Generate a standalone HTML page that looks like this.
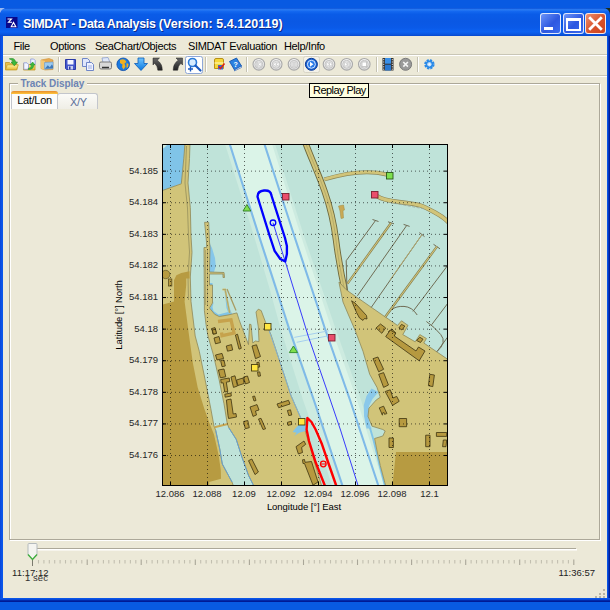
<!DOCTYPE html>
<html><head><meta charset="utf-8">
<style>
html,body{margin:0;padding:0;}
body{width:610px;height:610px;overflow:hidden;background:#085ae2;font-family:"Liberation Sans",sans-serif;position:relative;}
.abs{position:absolute;}
#win{position:absolute;left:0;top:8px;width:610px;height:594px;background:linear-gradient(to right,#0a44d8 0,#0a56ea 2px,#0a56ea 3px,#0a5cf0 606px,#0a5cf0 607px,#0848d8 608px,#0028a8 609px,#00138c 610px);border-radius:7px 7px 0 0;overflow:hidden;}
#title{position:absolute;left:0;top:0;width:610px;height:28px;background:linear-gradient(to bottom,#0a50d6 0%,#2a7cf4 6%,#1468f0 12%,#0a5ce8 22%,#0a58e4 50%,#0a5ae8 70%,#0c62f2 85%,#0a56e0 94%,#0848cc 100%);}
#title .t{position:absolute;left:23px;top:9px;color:#fff;font-weight:bold;font-size:12.5px;letter-spacing:-0.14px;text-shadow:1px 1px 0 #0a2a8a;white-space:nowrap;}
#client{position:absolute;left:3px;top:28px;width:604px;height:562px;background:#ece9d8;}
.menu{position:absolute;top:4px;font-size:11px;letter-spacing:-0.35px;color:#000;white-space:nowrap;}
.cb{position:absolute;top:5px;width:19px;height:19px;border:1px solid rgba(255,255,255,0.85);border-radius:3px;box-sizing:content-box;}
.yl{position:absolute;left:108px;width:50px;text-align:right;font-size:9.5px;letter-spacing:0px;line-height:12px;color:#262626}
.xl{position:absolute;top:487.800px;width:40px;text-align:center;font-size:9.5px;letter-spacing:0px;line-height:12px;color:#262626}
</style></head><body>
<div class="abs" style="left:604px;top:8px;width:6px;height:6px;background:#1c2c1c"></div>
<div class="abs" style="left:0;top:8px;width:5px;height:5px;background:#9ab8f0"></div>
<div id="win">
 <div id="title">
  <svg class="abs" style="left:6px;top:9px" width="12" height="11"><rect width="11.500" height="11" fill="#08088c"/><path d="M1.500 2h4l-3 3.200h3.500M5.200 9.800l2.300-4.300l2.300 4.300z" stroke="#fff" stroke-width="1.100" fill="none"/></svg>
  <div class="t"><span style="letter-spacing:-0.32px">SIMDAT - Data Analysis </span><span style="letter-spacing:0.05px">(Version: 5.4.120119)</span></div>
  <div class="cb" style="left:540px;background:linear-gradient(135deg,#6c94f8,#2e58e0 55%,#3a6cf0)"><div class="abs" style="left:3px;top:13px;width:9px;height:3px;background:#fff"></div></div>
  <div class="cb" style="left:563px;background:linear-gradient(135deg,#6c94f8,#2e58e0 55%,#3a6cf0)"><div class="abs" style="left:2px;top:4px;width:11px;height:8px;border:2px solid #fff;border-top-width:3px"></div></div>
  <div class="cb" style="left:585px;background:linear-gradient(135deg,#ee9070,#d8522a 55%,#cc4420)"><svg class="abs" style="left:0;top:0" width="19" height="19"><path d="M3.200 3.200L15.800 15.800M15.800 3.200L3.200 15.800" stroke="#fff" stroke-width="2.800"/></svg></div>
 </div>
 <div class="abs" style="left:0;top:590px;width:610px;height:4px;background:linear-gradient(to bottom,#0a5cf0 0,#0848d8 1.500px,#0028a8 2.500px,#00138c 4px)"></div>
  <div id="client">
  <div class="menu" style="left:10.500px">File</div>
  <div class="menu" style="left:47px">Options</div>
  <div class="menu" style="left:92px">SeaChart/Objects</div>
  <div class="menu" style="left:185px">SIMDAT Evaluation</div>
  <div class="menu" style="left:281px">Help/Info</div>
  <div class="abs" style="left:0;top:18px;width:604px;height:1px;background:#c9c6b6"></div>
  <div class="abs" style="left:0;top:19px;width:604px;height:1px;background:#fff"></div>
  <div class="abs" style="left:0;top:39px;width:604px;height:1px;background:#c9c6b6"></div>
  <div class="abs" style="left:0;top:40px;width:604px;height:1px;background:#fff"></div>
 </div>
</div>
<div id="p" class="abs" style="left:0;top:0;width:610px;height:610px">

<svg class="abs" style="left:0;top:54px" width="610" height="22" viewBox="0 54 610 22">
 <defs>
  <linearGradient id="gfold" x1="0" y1="0" x2="0" y2="1"><stop offset="0" stop-color="#fff3a0"/><stop offset="1" stop-color="#e8b830"/></linearGradient>
  <linearGradient id="gbtn" x1="0" y1="0" x2="0" y2="1"><stop offset="0" stop-color="#fdfdfd"/><stop offset="1" stop-color="#dcdcdc"/></linearGradient>
  <linearGradient id="gblue" x1="0" y1="0" x2="0" y2="1"><stop offset="0" stop-color="#6fc4ff"/><stop offset="1" stop-color="#0a78e0"/></linearGradient>
  <linearGradient id="gdark" x1="0" y1="0" x2="0" y2="1"><stop offset="0" stop-color="#666"/><stop offset="1" stop-color="#222"/></linearGradient>
 </defs>
 <!-- folder1 -->
 <path d="M5.500 62.500h4l1 1.200h6.500v6h-11.500z" fill="#eec048" stroke="#c09828" stroke-width=".8"/>
 <path d="M5.500 69.800l1.800-5h11l-1.800 5z" fill="url(#gfold)" stroke="#c8a030" stroke-width=".8"/>
 <path d="M9.300 58.800q5.500-1.500 6.300 3.200h1.900l-3.200 3.800l-3.200-3.800h1.900q-.4-2.300-3.700-3.200z" fill="#3cb83c" stroke="#1f8a25" stroke-width=".6"/>
 <!-- folder2 -->
 <path d="M23.500 63.500h3.500l1 1h7v5.500h-11.500z" fill="url(#gfold)" stroke="#c09828" stroke-width=".8"/>
 <path d="M23.800 62.800h3.200l1.500 1.500v5h-4.700z" fill="#f2f5ff" stroke="#8a98d8" stroke-width=".8"/>
 <path d="M30.700 59h3l1.500 1.500v4h-4.500z" fill="#eef2ff" stroke="#8a98d8" stroke-width=".8"/>
 <path d="M28.200 68.500q3.500-.5 3.200-3.500h-1.500l2.800-3l2.300 3h-1.400q.3 4.500-5.400 4.500z" fill="#3cb83c" stroke="#1f8a25" stroke-width=".5"/>
 <!-- folder3 -->
 <path d="M41 60l8-1.500l4 1.500v9.500l-8 .5l-4-1.500z" fill="#e8aa50" stroke="#d09038" stroke-width=".6"/>
 <path d="M41 60l4 1v9l-4-1.500z" fill="#f2c878"/>
 <path d="M44.500 62.500l8.500-.5v6.500l-8.500 .8z" fill="#9ccaf0" stroke="#6a9ad0" stroke-width=".6"/>
 <path d="M44.800 68.800l3-3.500l2 2l2-2.800l1.200 1.500v2.300z" fill="#3f78b8"/>
 <!-- sep -->
 <path d="M58.500 57v15" stroke="#c5c2b2"/><path d="M59.500 57v15" stroke="#fff"/>
 <!-- save -->
 <path d="M65.500 59.500h10v10h-9l-1-1z" fill="#4558cc" stroke="#2a3aa8" stroke-width="1"/>
 <rect x="67.500" y="60" width="6" height="4.500" fill="#f4f6ff"/>
 <rect x="68" y="66" width="5" height="3.500" fill="#c8d0f0"/><rect x="69" y="66.500" width="1.500" height="3" fill="#2a3aa0"/>
 <!-- copy -->
 <path d="M82.500 58.500h5l2 2v6h-7z" fill="#dfe6fb" stroke="#6f86c8" stroke-width="1"/>
 <path d="M86.500 62.500h5l2 2v6h-7z" fill="#eef2ff" stroke="#6f86c8" stroke-width="1"/>
 <path d="M88 66h4M88 68h4" stroke="#8ea0d8" stroke-width=".8"/>
 <!-- printer -->
 <path d="M102 58l6-.5l2 5h-7z" fill="#dfe8fa" stroke="#8a9ccc" stroke-width=".8"/>
 <path d="M99.500 63.500q0-1.500 1.500-1.500h9q1.500 0 1.500 1.500v4q0 1.500-1.500 1.500h-9q-1.500 0-1.500-1.500z" fill="#d8d8d8" stroke="#7a7a7a" stroke-width="1"/>
 <path d="M102 67.500h7" stroke="#333" stroke-width="1.500"/>
 <!-- globe -->
 <circle cx="123.200" cy="64.300" r="6.300" fill="#1a7ae0" stroke="#0a4aa8" stroke-width=".8"/>
 <path d="M120 60q3-1.500 5 0l1.500 2l-2 1.500l1 3l-2 3l-1.500-2.500l.5-2.500l-2.500-1.500z" fill="#f0b020"/>
 <path d="M126.500 63l2 1l-.5 3l-1.500 1z" fill="#f0b020"/>
 <!-- down arrow -->
 <path d="M138 58h6v5.500h3.500l-6.500 7l-6.500-7h3.500z" fill="url(#gblue)" stroke="#0a5ab8" stroke-width=".8"/>
 <!-- arrow UL -->
 <path d="M153 58h6.500l-2.200 2.200q5 3.500 5 10h-4.500q-.2-4.500-3.300-7l-1.500 1.800z" fill="url(#gdark)" stroke="#222" stroke-width=".5"/>
 <!-- arrow UR -->
 <path d="M182.500 58h-6.500l2.200 2.200q-5 3.500-5 10h4.500q.2-4.500 3.300-7l1.500 1.800z" fill="url(#gdark)" stroke="#222" stroke-width=".5"/>
 <!-- zoom button -->
 <rect x="185.500" y="56.500" width="17" height="17" rx="2" fill="#fff" stroke="#8fa8d8" stroke-width="1"/>
 <circle cx="192.500" cy="62.500" r="4" fill="#d6ecff" stroke="#2a7ad8" stroke-width="1.600"/>
 <path d="M195.500 65.500l5 5" stroke="#1a5ac0" stroke-width="2.200" stroke-linecap="round"/>
 <path d="M188 69h5M190.500 66.500v5" stroke="#1a5ac0" stroke-width="1.400"/>
 <!-- sep -->
 <path d="M205.500 57v15" stroke="#c5c2b2"/><path d="M206.500 57v15" stroke="#fff"/>
 <!-- notes -->
 <path d="M214.500 60q0-1.500 1.500-1.500h6q1.500 0 1.500 1.500v8.500h-9z" fill="#f6d83a" stroke="#b89018" stroke-width="1"/>
 <path d="M214.500 63h9" stroke="#fff6b0" stroke-width="1.200"/>
 <rect x="218" y="65" width="5" height="4.500" fill="#3a6ad0"/>
 <path d="M218.500 66.500l2 2l4-5" stroke="#e02010" stroke-width="1.500" fill="none"/>
 <!-- book -->
 <path d="M229.500 61.500l7-3.500l5 8l-7 4z" fill="#2a80e0" stroke="#0a4aa8" stroke-width=".8"/>
 <path d="M234.500 70l7-4v1.500l-7 3.500z" fill="#e8f0ff" stroke="#0a4aa8" stroke-width=".5"/>
 <text x="233.500" y="67" font-size="7" font-weight="bold" fill="#fff" font-family="Liberation Sans">?</text>
 <!-- sep -->
 <path d="M246.500 57v15" stroke="#c5c2b2"/><path d="M247.500 57v15" stroke="#fff"/>
 <!-- selected play bg -->
 <rect x="303.500" y="56.500" width="16" height="16" rx="2" fill="#f3f1e8" stroke="#d8d5c6" stroke-width="1"/>
 <!-- media buttons -->
 <g fill="url(#gbtn)" stroke="#a9a9a9" stroke-width="1.100">
  <circle cx="258.800" cy="64.300" r="5.800"/><circle cx="276.200" cy="64.300" r="5.800"/><circle cx="294" cy="64.300" r="5.800"/>
  <circle cx="329" cy="64.300" r="5.800"/><circle cx="346.700" cy="64.300" r="5.800"/><circle cx="364.300" cy="64.300" r="5.800"/>
 </g>
 <g fill="#e2e2e2" stroke="#c6c6c6" stroke-width="1">
  <circle cx="258.800" cy="64.300" r="4"/><circle cx="276.200" cy="64.300" r="4"/><circle cx="294" cy="64.300" r="4"/>
  <circle cx="329" cy="64.300" r="4"/><circle cx="346.700" cy="64.300" r="4"/><circle cx="364.300" cy="64.300" r="4"/>
 </g>
 <g fill="#fff" stroke="#bdbdbd" stroke-width="0.500">
  <path d="M256.500 62h1v4.600h-1zM261 62v4.600l-3-2.300z"/>
  <path d="M276 62v4.600l-2.800-2.300zM279 62v4.600l-2.800-2.300z"/>
  <path d="M292.300 62h1.100v4.600h-1.100zM294.600 62h1.100v4.600h-1.100z"/>
  <path d="M326.700 62v4.600l2.800-2.300zM329.500 62v4.600l2.800-2.300z"/>
  <path d="M344.500 62v4.600l3-2.300zM348 62h1v4.600h-1z"/>
 </g>
 <rect x="362" y="62" width="4.600" height="4.600" fill="#fff" stroke="#c0c0c0" stroke-width=".8"/>
 <circle cx="311.400" cy="64.300" r="6" fill="#1a62d0" stroke="#0a3a98" stroke-width="1"/>
 <circle cx="311.400" cy="64.300" r="4" fill="#2a7ae8" stroke="#d8e8ff" stroke-width="1"/>
 <path d="M310 61.800v5l3.400-2.500z" fill="#fff"/>
 <!-- sep -->
 <path d="M376.500 57v15" stroke="#c5c2b2"/><path d="M377.500 57v15" stroke="#fff"/>
 <!-- film -->
 <rect x="382.500" y="58" width="11" height="12.500" fill="#333"/>
 <rect x="385" y="58" width="6" height="5.700" fill="#3a90e8"/><rect x="385" y="64.700" width="6" height="5.800" fill="#2a78d0"/>
 <path d="M383.700 59v11M392.300 59v11" stroke="#ddd" stroke-width="1" stroke-dasharray="1.200 1.200"/>
 <!-- x circle -->
 <circle cx="405.600" cy="64.300" r="6" fill="#9a9a9a" stroke="#7a7a7a" stroke-width="1"/>
 <path d="M403.300 62l4.600 4.600M407.900 62l-4.600 4.600" stroke="#f4f4f4" stroke-width="1.600"/>
 <!-- sep -->
 <path d="M417.500 57v15" stroke="#c5c2b2"/><path d="M418.500 57v15" stroke="#fff"/>
 <!-- gear -->
 <circle cx="429.400" cy="64.300" r="4.200" fill="none" stroke="#2a8ae8" stroke-width="2" stroke-dasharray="2.200 1.100"/>
 <circle cx="429.400" cy="64.300" r="3" fill="#eaf4ff" stroke="#2a8ae8" stroke-width="1.700"/>
 <circle cx="429.400" cy="64.300" r="1.500" fill="#f4f9ff" stroke="#8ac0f4" stroke-width=".5"/>
</svg>
<div class="abs" style="left:309px;top:83px;width:55px;height:13px;border:1px solid #000;background:#ffffe1;font-size:11px;line-height:13px;letter-spacing:-0.55px;padding-left:3px;box-sizing:content-box;white-space:nowrap;z-index:5">Replay Play</div>


<div class="abs" style="left:10px;top:84px;width:591px;height:457px;border:1px solid #fff;box-sizing:border-box"></div>
<div class="abs" style="left:9px;top:83px;width:591px;height:457px;border:1px solid #aca899;box-sizing:border-box"></div>
<div class="abs" style="left:18px;top:78px;width:69px;height:12px;background:#ece9d8"></div>
<div class="abs" style="left:20.500px;top:77.500px;font-size:10px;font-weight:bold;color:#6c84b4;letter-spacing:-0.05px;line-height:12px;white-space:nowrap">Track Display</div>
<!-- tabs -->
<div class="abs" style="left:57px;top:93px;width:41px;height:16px;border:1px solid #c3c6cc;border-bottom:none;border-radius:3px 3px 0 0;box-sizing:border-box;background:linear-gradient(#fbfbf8,#efeee6)"></div>
<div class="abs" style="left:58px;top:96px;width:41px;font-size:11px;letter-spacing:-0.3px;text-align:center;color:#5b6f9a;line-height:13px">X/Y</div>
<div class="abs" style="left:11px;top:91px;width:47px;height:18px;border:1px solid #c3c6cc;border-bottom:none;border-radius:3px 3px 0 0;box-sizing:border-box;background:#fcfcfa"></div>
<div class="abs" style="left:11px;top:91px;width:47px;height:3px;border-radius:3px 3px 0 0;background:linear-gradient(#e68b2c,#ffc73c)"></div>
<div class="abs" style="left:11px;top:94px;width:47px;font-size:11px;letter-spacing:-0.3px;text-align:center;color:#000;line-height:13px">Lat/Lon</div>

<svg class="abs" style="left:162px;top:144px" width="286" height="342" viewBox="162 144 286 342" shape-rendering="auto">
 <defs><clipPath id="cp"><rect x="162.5" y="144.500" width="285" height="341"/></clipPath></defs>
 <g clip-path="url(#cp)">
 <!-- water base -->
 <rect x="162" y="144" width="286" height="342" fill="#bfe3d9"/>
 <!-- mid-light band -->
 <polygon points="225,144 275,144 304,236 336,330 361,400 388,486 332,486 318,442 303,400 281,330 270,290 254,236" fill="#cdebe0"/>
 <!-- light channel -->
 <polygon points="230,144 272,144 301,236 332,330 357,400 384,486 343,486 329,442 315,400 291,330 278,290 260,236" fill="#dbf4e8"/>
 <!-- blue top-left -->
 <polygon points="162,144 186,144 184,160 182,183 163,191 162,191" fill="#80c4e8"/>
 <polygon points="162,144 168,144 164,148 162,149" fill="#cdebe0"/>

 <g id="land">
 <!-- west land -->
 <polygon fill="#d1c479" stroke="#8e8858" stroke-width="0.8" points="161,191 181.3,183.8 183.8,158.4 185,143 190,143 189.500,158.4 188,183 190.300,207.600 191,236 192,252.400 190.300,277 191,301.600 195.200,336 199.300,351.300 205,379.200 210.800,408.700 214,426.200 215.700,430.300 219.800,449.200 222.300,464 232,482 233.800,487 161,487"/>
 <path d="M186.500 146L185 183L187.500 208L188.500 236L189.500 252L188 277L188.500 300" stroke="#8e8858" stroke-width="0.700" fill="none"/>
 <polygon fill="#b79b41" points="161,305 174,301.600 174,280.300 176.400,275.300 181.300,272.900 189.500,271.200 189.500,278.600 186.200,278.600 186.200,285 184.600,301.600 188.700,333 192.800,362.800 197.700,387.400 204.300,408.700 209.400,423 214,434.400 218.600,455 220.800,470 221,478.700 209.200,482 209.200,487 161,487"/>
 <circle cx="165.700" cy="274.500" r="4.200" fill="#b79b41" stroke="#6e6330" stroke-width="0.8"/>
 <rect x="168.500" y="279" width="3.300" height="7" fill="#b79b41" stroke="#5a4e20" stroke-width="0.8"/>
 <!-- basin blue -->
 <polygon fill="#86c6ea" points="209,242 212,248 215,258 215.800,266 214,272 209,272"/>
 <polygon fill="#80c4e8" points="208.500,283 212.500,283 213,303 210,308 214,315.500 219,318 232.500,315 229.500,308 226,290 224.500,290 226.500,308 228,312 218.500,314.500 213.500,311 212.500,307 213.500,303"/>
 <!-- central land -->
 <polygon fill="#d1c479" stroke="#8e8858" stroke-width="0.8" points="204.600,222.300 208.700,222.300 209.500,242 210,247.500 209.500,272 224,272.500 224.500,277.500 223,277.500 223,274 209.500,274 209.500,285 212.500,285 212.500,303 209.500,308 214.700,314.300 219.200,316.500 228,315 236.900,312.900 239,319.500 242.800,329.800 248.500,344.600 249.500,324.200 251,324.500 252.800,343 255.300,341 259,341.600 258.300,326.900 256,312 258.300,309.200 261.200,310.600 265.600,322.400 270.800,334.200 279.600,360.800 291,395.600 300.800,418 304,426 305.700,432.800 310.700,449.200 315.600,465.600 322,487 254.300,487 248.500,475.400 242,457.400 236.200,439.300 228.900,427.900 227.200,423.400 224,403.800 219,379.200 213.300,354.600 208,336 206,324.500 204.400,310.600 204,247.500 206.700,247.500 206.500,242"/>
 <path d="M205.500 250v55M207.500 250v55" stroke="#9a9260" stroke-width="0.600" fill="none"/>
 <!-- canal bridge -->
 <path d="M214.500 427.200L227.800 424" stroke="#c9a955" stroke-width="2.200"/>
 <!-- jetties near basin -->
 <path d="M222.500 289.500h3.500M225.200 290L229.700 313" stroke="#d1c479" stroke-width="1.800" fill="none"/>
 <path d="M222.500 289.500h3.500M225.200 290L229.700 313" stroke="#8e8858" stroke-width="0.500" fill="none"/>
 <path d="M227 289L236 310.500" stroke="#a89c62" stroke-width="1.300" fill="none"/>
 <!-- inlet blue near yellow square -->
 <polygon fill="#80c4e8" points="299.200,424.600 305.700,424.600 305.700,431 299.200,432.800 294.300,436 296.700,432.800 292.600,432 295,428.700"/>
 <!-- east blue -->
 <polygon fill="#8ac8ea" points="371.500,388.500 378.500,392 372.500,399 369,406 368,416 370,425 371.500,428.400 366.500,428.400 364,416 363.800,405 366.500,396"/>
 <polygon fill="#80c4e8" points="371,428 374,438.500 377,450.800 380.300,465.600 386,487 384.300,487 378.500,465 375,450 372.500,440 369,428"/>
 <!-- breakwater -->
 <path d="M305.500 143C312 160 318.500 174 324.500 191S333.500 220 336 240S340.500 272 346 296" stroke="#6f6a3e" stroke-width="6.400" fill="none"/>
 <path d="M305.500 143C312 160 318.500 174 324.500 191S333.500 220 336 240S340.500 272 346 296" stroke="#d1c479" stroke-width="4.600" fill="none"/>
 <path d="M305.500 143C312 160 318.500 174 324.500 191S333.500 220 336 240S340.500 272 346 296" stroke="#a59c62" stroke-width="0.600" fill="none"/>
 <path d="M324.300 179.400Q362 168 386.500 174.500" stroke="#8e8858" stroke-width="4" fill="none"/>
 <path d="M324.300 179.400Q362 168 386.500 174.500" stroke="#d1c479" stroke-width="2.800" fill="none"/>
 <path d="M377 196Q382 200 399 202T420.500 205.500T435 212.500T449 223" stroke="#8e8858" stroke-width="4.400" fill="none"/>
 <path d="M377 196Q382 200 399 202T420.500 205.500T435 212.500T449 223" stroke="#d1c479" stroke-width="3.200" fill="none"/>
 <path d="M390 202.500l35 6.500" stroke="#9aa89a" stroke-width="0.800" stroke-dasharray="3 1.500"/>
 <polygon points="338.500,206 343.500,205 344.500,210 343,210.500 343.500,218 341,218.500 340,211" fill="#c9a955" stroke="#a08a40" stroke-width="0.500"/>
 <!-- east land -->
 <polygon fill="#d1c479" stroke="#8e8858" stroke-width="0.8" points="339,282 346,289.500 350,292.500 370,306.400 397.500,325.400 401.500,320.800 408,325.400 402.800,334.600 415.200,341.800 419.800,334.600 426.400,338.500 423.800,343 448,359.500 448,487 386,487 380.300,465.600 377,450.800 374.600,438.500 382.800,436 385.200,431 382.800,429.500 372,426.200 368,416.400 368.900,408.200 376.200,400 380.300,397.200 377,387.400 369.700,374.300 363,351.300 355,330 348.500,315 343,302 339.500,285"/>
 <polygon fill="#b79b41" points="396,452 448,452 448,487 392.300,487"/>
 <!-- jetties -->
 <g stroke="#6f6c54" stroke-width="1" fill="none">
  <path d="M375.400 220.700L346.200 260.700"/>
  <path d="M391 223L347.500 283.600"/>
  <path d="M406.600 225.600L357.400 295.800"/>
  <path d="M422 234.600L371.300 307.300"/>
  <path d="M436.900 246.700L385.200 317"/>
  <path d="M448 265L413 311.400"/>
  <path d="M448 303L431.600 324.800"/>
  <path d="M448 336.600L437 351.600"/>
  <path d="M391.600 309.700Q396 306 404 306.400T417.200 315"/>
  <path d="M426.400 321.500Q434.300 326.700 440.800 334.600T436.900 351.600"/>
  <path d="M372.500 219.500l6 2M388 221.800l6 2M403.600 224.400l6 2M419.500 232.600l5 4M433.500 244.300l6.500 4.500"/>
  <path d="M346.200 260.700L347 290"/>
 </g>
 <g stroke="#7d7649" stroke-width="2.200" fill="none">
  <path d="M391 223L347.500 283.600"/><path d="M436.900 246.700L385.200 317"/>
 </g>
 <g stroke="#d1c479" stroke-width="1.100" fill="none">
  <path d="M391 223L347.500 283.600"/><path d="M436.900 246.700L385.200 317"/>
 </g>
 <g stroke="#b9ae72" stroke-width="0.900" fill="none">
  <path d="M422 234.600L390 280"/>
 </g>
 </g>

<g fill="#b6993f" stroke="#3e3410" stroke-width="0.800" stroke-linejoin="miter">
<polygon points="211.8,328.5 215.0,327.6 216.2,333.5 213.0,334.2"/>
<polygon points="214.0,338.0 219.0,336.5 220.5,342.5 215.5,343.8"/>
<polygon points="235.4,335.0 237.5,334.2 241.3,348.3 239.0,349.2"/>
<polygon points="226.3,346.0 231.5,344.6 232.7,350.0 227.5,351.2"/>
<polygon points="215.5,355.0 222.0,353.4 223.6,358.5 217.0,360.0"/>
<polygon points="220.6,360.5 224.0,360.0 225.3,366.0 222.0,366.7"/>
<polygon points="218.4,370.0 224.0,369.0 225.8,376.8 220.3,377.8"/>
<polygon points="220.7,379.5 229.2,378.0 229.7,381.5 226.3,382.2 227.8,391.5 224.7,392.0 223.2,382.8 221.2,383.0"/>
<polygon points="224.8,394.2 231.0,393.0 231.3,396.0 225.2,397.2"/>
<polygon points="226.4,400.0 231.0,399.0 233.2,414.0 236.0,413.5 236.5,417.0 228.6,418.5 228.0,415.5"/>
<polygon points="231.0,377.0 235.0,375.8 237.5,386.0 233.5,387.4"/>
<polygon points="236.5,380.0 243.0,378.0 244.2,383.5 238.0,385.5"/>
<polygon points="243.5,377.0 247.5,376.0 249.5,382.5 245.5,384.0"/>
<polygon points="252.0,346.0 256.5,344.8 260.5,356.5 255.5,358.7"/>
<polygon points="256.8,362.5 259.0,362.3 259.7,367.0 257.5,367.4"/>
<polygon points="257.5,372.2 259.8,371.9 260.5,376.0 258.2,376.3"/>
<polygon points="250.0,407.0 257.0,404.6 259.0,410.0 255.5,411.0 256.5,415.0 253.0,416.4"/>
<polygon points="252.6,396.5 254.6,396.0 256.0,400.5 254.0,401.0"/>
<polygon points="243.6,421.5 247.8,420.5 249.3,427.7 245.3,428.7"/>
<polygon points="258.5,419.0 261.0,418.3 265.6,428.8 263.0,429.5"/>
<polygon points="248.5,460.7 251.8,459.0 258.4,472.0 255.0,474.6"/>
<polygon points="277.0,404.0 288.5,400.3 290.0,404.0 278.7,407.7"/>
<polygon points="287.4,410.5 290.5,409.8 291.8,415.0 288.8,415.6"/>
<polygon points="287.4,422.3 291.3,421.3 291.8,424.5 288.0,425.4"/>
<polygon points="296.0,446.7 304.0,441.0 305.7,444.3 301.6,447.5 302.5,452.5 298.4,454.0"/>
<polygon points="302.5,459.8 304.5,459.5 305.0,462.3 311.5,461.5 318.0,482.0 313.0,485.2 304.5,463.5 303.0,463.5"/>
<polygon points="212.3,330.0 215.5,329.3 216.5,333.5 213.3,334.0"/>
<polygon points="351.6,300.8 355.0,303.0 360.5,309.0 366.5,315.5 367.0,319.0 364.5,318.5 363.0,320.4 359.5,318.0 356.5,312.5"/>
<polygon points="376.0,328.0 380.5,324.0 385.7,328.0 381.8,333.3"/>
<polygon points="388.5,331.5 392.0,329.4 396.0,333.0 393.0,336.2"/>
<polygon points="398.9,328.0 401.5,324.4 404.8,326.0 402.0,330.0"/>
<polygon points="416.6,340.5 419.8,337.2 423.0,339.2 420.5,342.5"/>
<polygon points="385.7,336.6 390.3,330.0 395.6,333.3 394.3,336.0 416.0,351.0 418.5,347.0 425.0,351.0 419.2,360.8"/>
<polygon points="373.0,358.7 377.9,357.0 383.6,369.3 378.7,371.8"/>
<polygon points="378.7,374.3 383.6,372.6 388.5,385.0 383.6,387.4"/>
<polygon points="385.2,391.5 390.2,389.8 393.0,398.0 396.7,396.4 399.2,401.3 392.6,405.4"/>
<polygon points="379.2,407.9 383.6,406.2 386.9,413.6 384.5,414.3 384.0,412.5 382.0,413.5 382.5,415.2"/>
<polygon points="399.2,418.5 406.6,418.5 406.6,426.7 399.2,426.7"/>
<polygon points="429.8,374.3 434.4,375.0 432.8,386.6 428.4,385.7"/>
<polygon points="389.0,438.0 393.4,438.0 393.4,447.5 389.0,447.5"/>
<polygon points="425.7,435.2 430.0,435.2 430.0,446.7 425.7,446.7"/>
<polygon points="436.4,432.5 446.7,432.5 446.7,436.4 436.4,436.4"/>
<polygon points="443.3,440.0 446.7,440.0 446.0,446.7 442.6,446.7"/>
</g>
<path d="M218 321.500L231 319.800L234 333L222 335.700L221.500 332.500" stroke="#c6a24c" stroke-width="3.300" fill="none"/>
<path d="M269.300 331.300L279.600 360.800L291 395.600L300.800 418" stroke="#7fb4e0" stroke-width="0.900" fill="none"/>
<path d="M215.700 430.300L219.800 449.200L222.300 464L232 482M228.900 427.900L236.200 439.300L242 457.400L248.500 475.400L254.300 487" stroke="#5fa0dc" stroke-width="0.900" fill="none"/>
<g stroke="#7fbae8" stroke-width="2.100" fill="none">
<path d="M229.700 144L259 236L276.500 290L289.500 330L313.800 400L328 442.600L342.600 486"/>
<path d="M264.400 144L294.300 236L325.400 330L350 400L378.500 486"/>
</g>
<path d="M294.300 337.400L328.700 330.800M296.700 342.300L328.700 335.700" stroke="#9fcbee" stroke-width="0.900" fill="none"/>

 </g>
 <!-- grid -->
 <g stroke="#000" stroke-opacity="0.6" stroke-width="1" stroke-dasharray="1 3" fill="none">
  <path d="M170.500 145v340M207.500 145v340M244.500 145v340M281.500 145v340M318.500 145v340M355.500 145v340M392.500 145v340M429.500 145v340"/>
  <path d="M163 171.13h284M163 202.73h284M163 234.33h284M163 265.93h284M163 297.53h284M163 329.13h284M163 360.73h284M163 392.33h284M163 423.93h284M163 455.53h284"/>
 </g>
 <g stroke="#000" stroke-width="1" fill="none">
  <path d="M170.500 145v3M207.500 145v3M244.500 145v3M281.500 145v3M318.500 145v3M355.500 145v3M392.500 145v3M429.500 145v3"/>
  <path d="M170.500 485v-3M207.500 485v-3M244.500 485v-3M281.500 485v-3M318.500 485v-3M355.500 485v-3M392.500 485v-3M429.500 485v-3"/>
  <path d="M163 171.13h3M163 202.73h3M163 234.33h3M163 265.93h3M163 297.53h3M163 329.13h3M163 360.73h3M163 392.33h3M163 423.93h3M163 455.53h3"/>
  <path d="M447 171.13h-3M447 202.73h-3M447 234.33h-3M447 265.93h-3M447 297.53h-3M447 329.13h-3M447 360.73h-3M447 392.33h-3M447 423.93h-3M447 455.53h-3"/>
 </g>

 <g clip-path="url(#cp)">
 <!-- thin blue track -->
 <path d="M273 222.800L285.200 261.400L308.200 336L330.300 400L340.500 430L358.200 486" stroke="#1a1aff" stroke-width="0.850" fill="none"/>
 <!-- blue ship -->
 <path d="M257.600 197Q257.200 191 264 190.500T271.300 195L285 238L286.900 246L286.900 254L285.200 261.400L280.300 259L274.600 250.800L269.700 236Z" stroke="#0000ff" stroke-width="2.350" fill="none" stroke-linejoin="round"/>
 <circle cx="273" cy="222.800" r="2.800" stroke="#0000ff" stroke-width="1.300" fill="none"/>
 <!-- red ship -->
 <path d="M330 500L324.600 485L315.600 462.300L309 441L306.600 429.500L307.400 418L311.500 422L315.600 429.500L322 444.300L328.700 464L336 485L341 500" stroke="#ff0000" stroke-width="2.400" fill="none" stroke-linejoin="round"/>
 <circle cx="323.300" cy="464" r="2.800" stroke="#ff0000" stroke-width="1.300" fill="none"/>
 <path d="M320.500 464h5.600" stroke="#ff0000" stroke-width="1.200"/>
 <!-- markers -->
 <g stroke-width="0.900">
 <rect x="282.500" y="193.500" width="6.500" height="6.500" fill="#ea4e6c" stroke="#7a2030"/>
 <rect x="371.500" y="191.500" width="6.500" height="6.500" fill="#ea4e6c" stroke="#7a2030"/>
 <rect x="328.500" y="334.500" width="6.500" height="6.500" fill="#ea4e6c" stroke="#7a2030"/>
 <rect x="386.500" y="172.500" width="6.500" height="6.500" fill="#7fe04f" stroke="#2a5a18"/>
 <rect x="264.500" y="323.500" width="6.500" height="6.500" fill="#ffe640" stroke="#4a4010"/>
 <rect x="251.500" y="364.500" width="6.500" height="6.500" fill="#ffe640" stroke="#4a4010"/>
 <rect x="298.500" y="418.500" width="6.500" height="6.500" fill="#ffe640" stroke="#4a4010"/>
 <polygon points="246.900,204.500 250.800,211 243,211" fill="#7fe04f" stroke="#2f7a24"/>
 <polygon points="293.400,346 297.500,352.600 289.300,352.600" fill="#7fe04f" stroke="#2a8a28"/>
 </g>
 </g>

 <rect x="162.500" y="144.500" width="285" height="341" fill="none" stroke="#000" stroke-width="1"/>
</svg>
<div class="yl" style="top:164.5px">54.185</div>
<div class="yl" style="top:196.1px">54.184</div>
<div class="yl" style="top:227.7px">54.183</div>
<div class="yl" style="top:259.3px">54.182</div>
<div class="yl" style="top:290.9px">54.181</div>
<div class="yl" style="top:322.5px">54.18</div>
<div class="yl" style="top:354.1px">54.179</div>
<div class="yl" style="top:385.7px">54.178</div>
<div class="yl" style="top:417.3px">54.177</div>
<div class="yl" style="top:448.9px">54.176</div>
<div class="xl" style="left:150.0px">12.086</div>
<div class="xl" style="left:187.0px">12.088</div>
<div class="xl" style="left:224.0px">12.09</div>
<div class="xl" style="left:261.0px">12.092</div>
<div class="xl" style="left:298.0px">12.094</div>
<div class="xl" style="left:335.0px">12.096</div>
<div class="xl" style="left:372.0px">12.098</div>
<div class="xl" style="left:409.5px">12.1</div>
<div class="abs" style="left:204px;top:501px;width:200px;text-align:center;font-size:9.5px;letter-spacing:-0.05px;line-height:12px">Longitude [°] East</div>
<div class="abs" style="left:19px;top:309px;width:200px;text-align:center;font-size:9.5px;letter-spacing:-0.12px;line-height:12px;transform:rotate(-90deg)">Latitude [°] North</div>


<svg class="abs" style="left:0;top:540px" width="610" height="60" viewBox="0 540 610 60">
 <path d="M36 548.500h540" stroke="#aca899" stroke-width="1"/>
 <path d="M36 549h541v1.500h-541z" fill="#fff" stroke="none"/>
 <path d="M38.5 560v3.500M43.9 560v3.500M49.3 560v3.500M54.7 560v3.500M60.1 560v3.500M65.5 560v3.500M70.9 560v3.500M76.4 560v3.500M81.8 560v3.500M92.6 560v3.500M98.0 560v3.500M103.4 560v3.500M108.8 560v3.500M114.2 560v3.500M119.6 560v3.500M125.0 560v3.500M130.4 560v3.500M135.8 560v3.500M146.6 560v3.500M152.1 560v3.500M157.5 560v3.500M162.9 560v3.500M168.3 560v3.500M173.7 560v3.500M179.1 560v3.500M184.5 560v3.500M189.9 560v3.500M200.7 560v3.500M206.1 560v3.500M211.5 560v3.500M216.9 560v3.500M222.3 560v3.500M227.8 560v3.500M233.2 560v3.500M238.6 560v3.500M244.0 560v3.500M254.8 560v3.500M260.2 560v3.500M265.6 560v3.500M271.0 560v3.500M276.4 560v3.500M281.8 560v3.500M287.2 560v3.500M292.6 560v3.500M298.0 560v3.500M308.9 560v3.500M314.3 560v3.500M319.7 560v3.500M325.1 560v3.500M330.5 560v3.500M335.9 560v3.500M341.3 560v3.500M346.7 560v3.500M352.1 560v3.500M362.9 560v3.500M368.3 560v3.500M373.7 560v3.500M379.1 560v3.500M384.6 560v3.500M390.0 560v3.500M395.4 560v3.500M400.8 560v3.500M406.2 560v3.500M417.0 560v3.500M422.4 560v3.500M427.8 560v3.500M433.2 560v3.500M438.6 560v3.500M444.0 560v3.500M449.4 560v3.500M454.8 560v3.500M460.3 560v3.500M471.1 560v3.500M476.5 560v3.500M481.9 560v3.500M487.3 560v3.500M492.7 560v3.500M498.1 560v3.500M503.5 560v3.500M508.9 560v3.500M514.3 560v3.500M525.1 560v3.500M530.5 560v3.500M536.0 560v3.500M541.4 560v3.500M546.8 560v3.500M552.2 560v3.500M557.6 560v3.500M563.0 560v3.500M568.4 560v3.500" stroke="#c2bfb0" stroke-width="1.100"/>
 <path d="M87.2 559.500v5.500M141.2 559.500v5.500M195.3 559.500v5.500M249.4 559.500v5.500M303.5 559.500v5.500M357.5 559.500v5.500M411.6 559.500v5.500M465.7 559.500v5.500M519.7 559.500v5.500M573.8 559.500v5.500" stroke="#a9a698" stroke-width="1.100"/>
 <path d="M32.500 558v8" stroke="#7c7a6e" stroke-width="1"/>
 <path d="M28 544.500q0-1 1-1h7q1 0 1 1v10l-4.500 5l-4.500-5z" fill="#f4f4f0" stroke="#b4babd" stroke-width="1"/>
 <path d="M28 554.500l4.500 5l4.500-5" fill="none" stroke="#3fae3f" stroke-width="1.300"/>
 <g fill="#b8b5a6"><rect x="603" y="589" width="2" height="2"/><rect x="599" y="593" width="2" height="2"/><rect x="603" y="593" width="2" height="2"/><rect x="595" y="596" width="2" height="2"/><rect x="599" y="596" width="2" height="2"/><rect x="603" y="596" width="2" height="2"/></g>
</svg>
<div class="abs" style="left:12px;top:566.600px;font-size:9.5px;letter-spacing:0.05px;line-height:12px;color:#222;white-space:nowrap">11:17:12</div>
<div class="abs" style="left:25px;top:571.800px;font-size:9.5px;letter-spacing:0.05px;line-height:12px;color:#333;white-space:nowrap">1 sec</div>
<div class="abs" style="left:558.500px;top:566.600px;font-size:9.5px;letter-spacing:0.05px;line-height:12px;color:#222;white-space:nowrap">11:36:57</div>

</div>
</body></html>
